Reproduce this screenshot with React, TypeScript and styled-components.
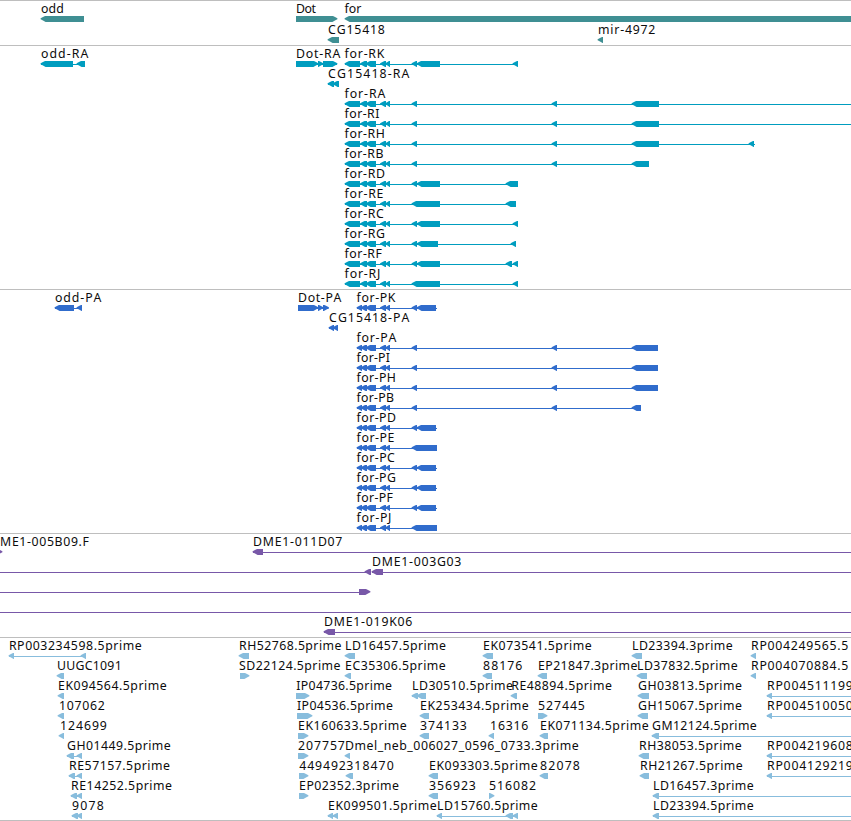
import React from "react";
import styled, { createGlobalStyle } from "styled-components";

type Exon = [number, number];
type Feature = {
  label?: string;
  /** left and right edge of the label */
  at?: [number, number];
  exons?: Exon[];
  dir?: "l" | "r";
  /** extent of the thin intron line; defaults to the extent of the exons */
  line?: [number, number];
};
type TrackData = { color: string; pitch: number; height: number; rows: Feature[][] };

const VIEW = 851;
const FONT_SIZE = 12.3;
const FONT = '"Noto Sans", "Open Sans", sans-serif';

const f = (
  label: string,
  start: number,
  end: number,
  exons: Exon[],
  dir: "l" | "r" = "l",
  line?: [number, number]
): Feature => ({ label, at: [start, end], exons, dir, line });

const genes: Feature[][] = [
  [
    f("odd", 41.3, 63.5, [[41, 84]]),
    f("Dot", 296.5, 315.5, [[296, 337]], "r"),
    f("for", 345, 361, [[345, 860]]),
  ],
  [f("CG15418", 328.5, 384.5, [[328, 339]]), f("mir-4972", 598.5, 655, [[598, 603]])],
];

const utr: Exon[] = [[345, 360], [360.5, 367], [366, 376], [380.5, 386], [385.5, 390]];
const near: Exon[] = [...utr, [412, 417], [417, 440]];
const far: Exon[] = [...utr, [412, 417], [552, 557]];

const transcripts: Feature[][] = [
  [
    f("odd-RA", 41.3, 88, [[41, 73], [77, 85]]),
    f("Dot-RA", 296.5, 340, [[296, 318], [318, 323], [323, 337]], "r"),
    f("for-RK", 345, 384, [...near, [513, 518]]),
  ],
  [f("CG15418-RA", 328.5, 409, [[328, 334], [333, 339]])],
  [f("for-RA", 345, 385, [...far, [632, 659]], "l", [345, VIEW])],
  [f("for-RI", 345, 379, [...far, [632, 659]], "l", [345, VIEW])],
  [f("for-RH", 345, 384.5, [...far, [632, 659], [749, 754]], "l", [345, 755])],
  [f("for-RB", 345, 383, [...far, [632, 649]])],
  [f("for-RD", 345, 384.5, [...near, [506, 518]])],
  [f("for-RE", 345, 383, [...utr, [412, 440], [506, 516]])],
  [f("for-RC", 345, 383.5, [...near, [513, 518]])],
  [f("for-RG", 345, 384.5, [...utr, [412, 417], [417, 438], [511, 516]])],
  [f("for-RF", 345, 381.5, [...near, [506, 512], [513, 518]])],
  [f("for-RJ", 345, 380, [...utr, [412, 440], [513, 518]])],
];

const cds: Exon[] = [[357, 362], [361, 367], [366, 376], [380.5, 386], [385.5, 390]];
const split: Exon[] = [...cds, [412, 417], [417, 436]];
const joined: Exon[] = [...cds, [412, 437]];
const farCds: Exon[] = [...cds, [412, 417], [552, 557]];

const proteins: Feature[][] = [
  [
    f("odd-PA", 55.3, 101, [[55, 74], [77, 82]]),
    f("Dot-PA", 298.5, 341, [[298, 318], [318, 323], [323, 328.5]], "r"),
    f("for-PK", 357, 395, split, "l", [357, 437]),
  ],
  [f("CG15418-PA", 329.5, 409, [[329, 334], [333, 338]])],
  [f("for-PA", 357, 396, [...farCds, [632, 658]])],
  [f("for-PI", 357, 389.5, [...farCds, [632, 658]])],
  [f("for-PH", 357, 395.5, [...farCds, [632, 658]])],
  [f("for-PB", 357, 393.5, [...farCds, [632, 641]])],
  [f("for-PD", 357, 395.5, split, "l", [357, 437])],
  [f("for-PE", 357, 394, joined)],
  [f("for-PC", 357, 394.5, split, "l", [357, 437])],
  [f("for-PG", 357, 395.5, split, "l", [357, 437])],
  [f("for-PF", 357, 392.5, split, "l", [357, 437])],
  [f("for-PJ", 357, 391, joined)],
];

const bacs: Feature[][] = [
  [
    f("ME1-005B09.F", 0.5, 88.5, [[-3, 2]], "r"),
    f("DME1-011D07", 253.5, 342, [[253, 263]], "l", [253, VIEW]),
  ],
  [
    { exons: [[365, 371]], dir: "l", line: [0, 371] },
    f("DME1-003G03", 372.5, 461, [[372, 383]], "l", [372, VIEW]),
  ],
  [{ exons: [[359, 370]], dir: "r", line: [0, 365] }],
  [{ line: [0, VIEW] }],
  [f("DME1-019K06", 324.5, 412, [[324, 335]], "l", [324, VIEW])],
];

const ests: Feature[][] = [
  [
    f("RP003234598.5prime", 9.3, 141.3, [[9, 14], [81, 86]]),
    f("RH52768.5prime", 239.5, 341, [[239, 249]]),
    f("LD16457.5prime", 345.5, 445.5, [[345, 355]]),
    f("EK073541.5prime", 483.5, 591.3, [[483, 493]]),
    f("LD23394.3prime", 632.5, 732.3, [[632, 642]]),
    f("RP004249565.5", 751.5, 848, [[751, 756]]),
  ],
  [
    f("UUGC1091", 57.5, 121.3, [[57, 64]]),
    f("SD22124.5prime", 239.5, 340, [[240, 249]], "r"),
    f("EC35306.5prime", 345.5, 445.3, [[345, 351]]),
    f("88176", 483.5, 522, [[483, 492]]),
    f("EP21847.3prime", 538.5, 637, [[538, 547]]),
    f("LD37832.5prime", 637.5, 737.3, [[637, 647]]),
    f("RP004070884.5", 751.5, 848, [[751, 756]]),
  ],
  [
    f("EK094564.5prime", 58.5, 166.3, [[58, 64]]),
    f("IP04736.5prime", 296.7, 391.5, [[296, 309]], "r"),
    f("LD30510.5prime", 412.5, 512.5, [[412, 418], [417, 426]]),
    f("RE48894.5prime", 511.7, 611.5, [[511, 517]]),
    f("GH03813.5prime", 638.5, 741.5, [[638, 649]]),
    f("RP004511199", 767.5, 852.3, [[767, 772]], "l", [767, VIEW]),
  ],
  [
    f("107062", 59.5, 104.5, [[58, 64]]),
    f("IP04536.5prime", 297.5, 392.5, [[297, 312]], "r"),
    f("EK253434.5prime", 420.5, 528.3, [[420, 429]]),
    f("527445", 538.5, 584.5, [[538, 547]], "r"),
    f("GH15067.5prime", 638.5, 741.5, [[638, 648]]),
    f("RP004510050", 767.5, 852.3, [[767, 772]], "l", [767, VIEW]),
  ],
  [
    f("124699", 60.5, 106.5, [[59, 64]]),
    f("EK160633.5prime", 298.5, 406.3, [[298, 308]], "r"),
    f("374133", 420.5, 466.5, [[420, 429]]),
    f("16316", 490.5, 528, [[489, 494]]),
    f("EK071134.5prime", 540.5, 648.3, [[540, 548]]),
    f("GM12124.5prime", 652.5, 756.3, [[652, 659]], "l", [652, VIEW]),
  ],
  [
    f("GH01449.5prime", 67.5, 170.3, [[67, 74], [77, 82]]),
    f("207757", 298.5, 344.5, [[298, 308]], "r"),
    f("Dmel_neb_006027_0596_0733.3prime", 345.5, 578.3, [[345, 350]]),
    f("RH38053.5prime", 639.5, 741.3, [[639, 649]]),
    f("RP004219608", 767.5, 852.3, [[767, 772]], "l", [767, VIEW]),
  ],
  [
    f("RE57157.5prime", 69.5, 169.5, [[69, 75], [77, 82]]),
    f("449492", 299.7, 345.5, [[299, 308]], "r"),
    f("318470", 346.7, 393.3, [[346, 353]]),
    f("EK093303.5prime", 429.5, 537.3, [[429, 438]]),
    f("82078", 540.5, 579.5, [[540, 548]]),
    f("RH21267.5prime", 640.5, 742.3, [[640, 649]]),
    f("RP004129219", 767.5, 852.3, [[767, 772]], "l", [767, VIEW]),
  ],
  [
    f("RE14252.5prime", 71.5, 171.5, [[71, 77], [77, 82]]),
    f("EP02352.3prime", 299.5, 398.5, [[299, 308]], "r"),
    f("356923", 429.5, 475.5, [[429, 438]]),
    f("516082", 489.5, 535.7, [[489, 494]], "r"),
    f("LD16457.3prime", 653.5, 753.3, [[653, 659]], "l", [653, VIEW]),
  ],
  [
    f("9078", 72.5, 103.5, [[72, 78], [77, 82]]),
    f("EK099501.5prime", 328.5, 436.3, [[328, 333], [333, 338]]),
    f("LD15760.5prime", 437.5, 537.3, [[437, 442], [506, 513], [513, 518]]),
    f("LD23394.5prime", 653.5, 753.3, [[653, 659]], "l", [653, VIEW]),
  ],
];

const tracks: TrackData[] = [
  { color: "#3f8f93", pitch: 21, height: 45, rows: genes },
  { color: "#009dbf", pitch: 20, height: 244, rows: transcripts },
  { color: "#306ccc", pitch: 20, height: 244, rows: proteins },
  { color: "#7858a8", pitch: 20, height: 104, rows: bacs },
  { color: "#88bddd", pitch: 20, height: 183, rows: ests },
];

const GlobalStyle = createGlobalStyle`
  body { margin: 0; background: #fff; overflow: hidden; }
`;

const Browser = styled.main`
  width: ${VIEW}px;
  height: 821px;
  box-sizing: border-box;
  overflow: hidden;
  background: #fff;
  border-bottom: 1px solid #bebebe;
`;

const Track = styled.section<{ $height: number }>`
  box-sizing: border-box;
  height: ${(p) => p.$height}px;
  border-top: 1px solid #bebebe;
`;

const Lane = styled.div<{ $pitch: number }>`
  position: relative;
  height: ${(p) => p.$pitch}px;
`;

const Label = styled.span`
  position: absolute;
  top: -1px;
  font: ${FONT_SIZE}px/17px ${FONT};
  font-kerning: none;
  white-space: pre;
  color: #0c0c0c;
`;

const Glyphs = styled.svg<{ $color: string }>`
  display: block;
  width: ${VIEW}px;
  height: 21px;
  fill: ${(p) => p.$color};
`;

const ctx = document.createElement("canvas").getContext("2d")!;

/** Spacing that makes a label fill its span on the map. */
function tracking(text: string, width: number) {
  ctx.font = `${FONT_SIZE}px ${FONT}`;
  ctx.fontKerning = "none";
  return (width + 0.8 - ctx.measureText(text).width) / (text.length - 1);
}

function exonPath([a, b]: Exon, dir: "l" | "r") {
  const tip = Math.min(5, b - a);
  const [point, s, end] = dir === "l" ? [a, 1, b] : [b, -1, a];
  const x = (d: number) => point + s * d;
  return `M${x(-0.4)} 2.3L${x(2)} 1.1L${x(tip - 1)} 0H${end}V6H${x(tip - 0.4)}L${x(2)} 4.6L${x(-0.4)} 3.3Z`;
}

function FeatureGlyph({ feature }: { feature: Feature }) {
  const { exons = [], dir = "l" } = feature;
  const span = feature.line ?? (exons.length > 1 ? [exons[0][0], exons[exons.length - 1][1]] : null);
  return (
    <g transform="translate(0 15)">
      {span && <rect x={span[0]} y={3} width={span[1] - span[0]} height={1} />}
      {exons.map((e, i) => (
        <path key={i} d={exonPath(e, dir)} />
      ))}
    </g>
  );
}

export default function App() {
  return (
    <>
      <GlobalStyle />
      <Browser>
        {tracks.map((track, t) => (
          <Track key={t} $height={track.height}>
            {track.rows.map((row, r) => (
              <Lane key={r} $pitch={track.pitch}>
                <Glyphs $color={track.color}>
                  {row.map((feature, i) => (
                    <FeatureGlyph key={i} feature={feature} />
                  ))}
                </Glyphs>
                {row.map(
                  (feature, i) =>
                    feature.label &&
                    feature.at && (
                      <Label
                        key={i}
                        style={{
                          left: feature.at[0] - 0.4,
                          letterSpacing: tracking(feature.label, feature.at[1] - feature.at[0]),
                        }}
                      >
                        {feature.label}
                      </Label>
                    )
                )}
              </Lane>
            ))}
          </Track>
        ))}
      </Browser>
    </>
  );
}
